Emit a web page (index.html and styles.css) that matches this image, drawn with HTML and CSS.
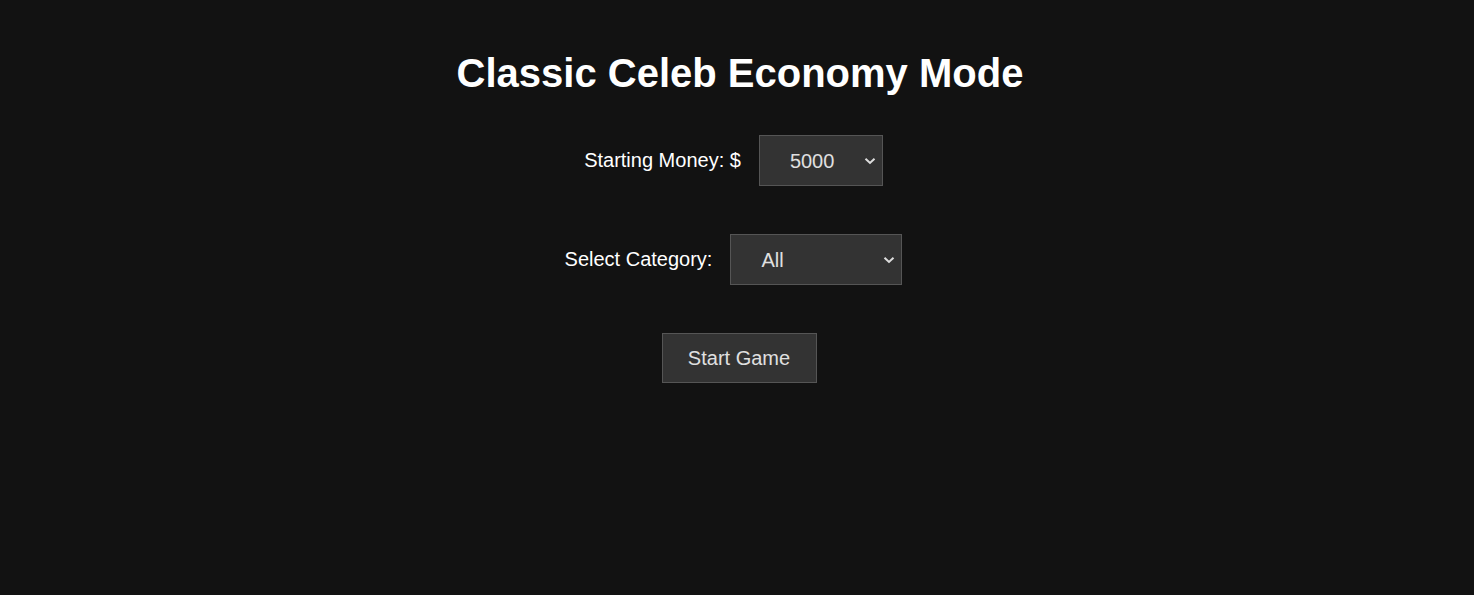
FILE: index.html
```html
<!DOCTYPE html>
<html lang="en">
<head>
<meta charset="utf-8">
<title>Classic Celeb Economy Mode</title>
<link rel="stylesheet" href="styles.css">
</head>
<body>
<main class="container">
  <h1 class="title">Classic Celeb Economy Mode</h1>
  <div class="row">
    <label class="label" for="money">Starting Money: $</label>
    <select id="money" class="select select-money">
      <option>1000</option>
      <option selected>5000</option>
      <option>10000</option>
    </select>
  </div>
  <div class="row">
    <label class="label" for="category">Select Category:</label>
    <select id="category" class="select select-cat">
      <option selected>All</option>
      <option>Actors</option>
      <option>Musicians</option>
      <option>Athletes</option>
    </select>
  </div>
  <div class="row row-button">
    <button class="button" type="button">Start Game</button>
  </div>
</main>
</body>
</html>
```
FILE: styles.css
```css
html, body {
  margin: 0;
  padding: 0;
  background: #121212;
  color: #ffffff;
  font-family: "Liberation Sans", Arial, sans-serif;
}

.container {
  display: flex;
  flex-direction: column;
  align-items: center;
  padding-top: 50px;
  padding-left: 6px;
}

.title {
  margin: 0;
  font-size: 40px;
  line-height: 46px;
  font-weight: bold;
  color: #ffffff;
}

.row {
  display: flex;
  align-items: center;
  justify-content: center;
  gap: 18px;
  margin-top: 48px;
  margin-right: 13px;
}

.row:first-of-type {
  margin-top: 39px;
}

.row-button {
  margin-right: 2px;
}

.label {
  font-size: 20px;
  color: #ffffff;
}

.select {
  box-sizing: border-box;
  height: 51px;
  padding: 0 24px 0 30px;
  font-family: "Liberation Sans", Arial, sans-serif;
  font-size: 20px;
  color: #e0e0e0;
  background-color: #333333;
  background-image: url("data:image/svg+xml,%3Csvg xmlns='http://www.w3.org/2000/svg' width='12' height='8' viewBox='0 0 12 8'%3E%3Cpath d='M1.5 1.8 L6 6 L10.5 1.8' fill='none' stroke='%23dddddd' stroke-width='2'/%3E%3C/svg%3E");
  background-repeat: no-repeat;
  background-position: right 6px center;
  background-size: 12px 8px;
  border: 1px solid #555555;
  border-radius: 0;
  -webkit-appearance: none;
  appearance: none;
  color-scheme: dark;
}

.select-money {
  width: 124px;
}

.select-cat {
  width: 172px;
}

.button {
  box-sizing: border-box;
  width: 155px;
  height: 50px;
  padding: 0;
  font-family: "Liberation Sans", Arial, sans-serif;
  font-size: 20px;
  color: #e0e0e0;
  background-color: #333333;
  border: 1px solid #555555;
  border-radius: 0;
  cursor: pointer;
}
```
